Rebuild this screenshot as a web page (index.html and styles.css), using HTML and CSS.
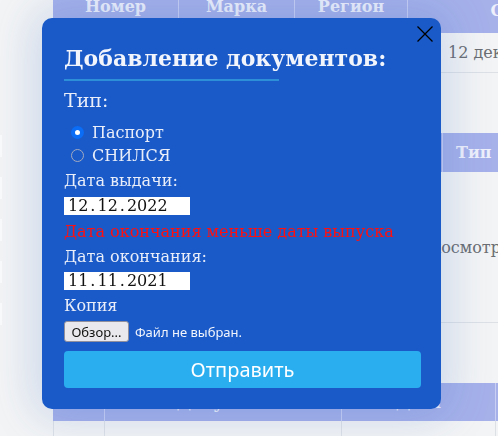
FILE: index.html
```html
<!DOCTYPE html>
<html lang="ru">
<head>
<meta charset="utf-8">
<title>Добавление документов</title>
<link rel="stylesheet" href="styles.css">
</head>
<body>
<div class="page">
  <aside class="side">
    <span class="side-item"></span>
    <span class="side-item"></span>
    <span class="side-item"></span>
    <span class="side-item"></span>
    <span class="side-item"></span>
  </aside>
  <main class="main">
    <div class="table t1">
      <div class="thead">
        <div class="th">Номер</div>
        <div class="th">Марка</div>
        <div class="th">Регион</div>
        <div class="th th-last">Срок</div>
      </div>
      <div class="trow">
        <div class="td"></div>
        <div class="td"></div>
        <div class="td"></div>
        <div class="td">12 декабря</div>
      </div>
    </div>

    <div class="table t2">
      <div class="thead">
        <div class="th">Номер</div>
        <div class="th">Тип</div>
      </div>
      <div class="trow tall">
        <div class="td"></div>
        <div class="td">Техосмотр</div>
      </div>
      <div class="trow empty"></div>
    </div>

    <div class="table t3">
      <div class="thead">
        <div class="th"></div>
        <div class="th">Документ</div>
        <div class="th">Дата</div>
        <div class="th"></div>
      </div>
      <div class="trow">
        <div class="td"></div>
        <div class="td"></div>
        <div class="td"></div>
        <div class="td"></div>
      </div>
    </div>
  </main>
</div>

<div class="modal">
  <button class="close" aria-label="Закрыть">
    <svg width="16" height="16" viewBox="0 0 16 16"><path d="M0.5 0.5 L15.5 15.5 M15.5 0.5 L0.5 15.5" stroke="#000" stroke-width="1.3" fill="none"/></svg>
  </button>
  <h2 class="title">Добавление документов:</h2>
  <div class="rule"></div>
  <div class="label big">Тип:</div>
  <label class="radio-row first"><span class="radio checked"></span>Паспорт</label>
  <label class="radio-row"><span class="radio"></span>СНИЛСЯ</label>
  <div class="label">Дата выдачи:</div>
  <div class="date"><span>12</span><span>.</span><span>12</span><span>.</span><span>2022</span></div>
  <div class="error">Дата окончания меньше даты выпуска</div>
  <div class="label">Дата окончания:</div>
  <div class="date"><span>11</span><span>.</span><span>11</span><span>.</span><span>2021</span></div>
  <div class="label">Копия</div>
  <div class="file"><span class="file-btn">Обзор...</span><span class="file-name">Файл не выбран.</span></div>
  <button class="submit">Отправить</button>
</div>
</body>
</html>
```

FILE: styles.css
```css
* { box-sizing: border-box; }
html, body { margin: 0; padding: 0; }
body {
  background: #f3f4f5;
  font-family: "DejaVu Serif", serif;
  width: 498px;
  height: 436px;
  overflow: hidden;
}
.page { display: flex; }
.side {
  width: 53px;
  flex: none;
  display: flex;
  flex-direction: column;
  gap: 20px;
  padding-top: 135px;
}
.side-item { display: block; width: 2px; height: 22px; background: #fbfbfc; }
.main { flex: none; width: 600px; margin-top: -20px; }

.table { width: 566px; }
.thead {
  display: grid;
  background: #a6b1ea;
  color: #eef0fb;
  font-weight: bold;
  font-size: 16px;
}
.th {
  display: flex;
  align-items: center;
  justify-content: center;
  border-left: 1px solid #c9cff3;
}
.th:first-child { border-left: none; }
.trow { display: grid; border-bottom: 1px solid #dde1e6; }
.td {
  display: flex;
  align-items: center;
  color: #6b6e72;
  font-size: 16px;
  white-space: nowrap;
  overflow: hidden;
}

.t1 .thead, .t1 .trow { grid-template-columns: 125px 116px 113px 1fr; }
.t1 .thead { height: 53px; }
.t1 .th-last { align-items: flex-end; padding-bottom: 13px; }
.t1 .trow { height: 40px; }
.t1 .td:last-child { padding-left: 41px; }

.t2 { margin-top: 60px; }
.t2 .thead, .t2 .trow { grid-template-columns: 389px 1fr; }
.t2 .thead { height: 39px; }
.t2 .th:last-child { justify-content: flex-start; padding-left: 13px; }
.t2 .trow.tall { height: 151px; }
.t2 .td:last-child { justify-content: flex-start; }
.t2 .trow.tall .td:last-child { margin-left: -30px; }
.t2 .trow.empty { height: 60px; border-bottom: none; }

.t3 .thead, .t3 .trow { grid-template-columns: 51px 237px 154px 1fr; }
.t3 .thead { height: 38px; }
.t3 .trow { height: 40px; border-bottom: none; }
.t3 .td { border-left: 1px solid #dde1e6; }

/* modal */
.modal {
  position: fixed;
  left: 42px;
  top: 18px;
  width: 399px;
  height: 391px;
  padding: 28px 20px 20px 22px;
  background: #1a5ac8;
  border-radius: 10px;
  box-shadow: 0 0 45px 8px rgba(40, 100, 195, 0.2);
  color: #e9eef9;
  font-family: "DejaVu Serif", serif;
  font-size: 16px;
  display: flex;
  flex-direction: column;
  align-items: flex-start;
}
.close {
  position: absolute;
  right: 8px;
  top: 8px;
  width: 16px;
  height: 16px;
  padding: 0;
  border: none;
  background: none;
  display: flex;
}
.title {
  margin: 0;
  font-size: 22px;
  line-height: 24px;
  font-weight: bold;
  color: #f2f5fc;
}
.rule {
  width: 215px;
  height: 2px;
  margin-top: 9px;
  background: #2d8fd8;
}
.label { line-height: 22px; }
.label.big { font-size: 19px; margin-top: 8px; }
.radio-row {
  display: flex;
  align-items: center;
  gap: 8px;
  padding-left: 7px;
  line-height: 23px;
}
.radio-row.first { margin-top: 10px; }
.radio {
  width: 13px;
  height: 13px;
  border-radius: 50%;
  border: 1px solid #a3aac0;
  background: #1a5ac8;
}
.radio.checked {
  border: 4px solid #0b6cf5;
  background: #fff;
}
.radio-row + .label { margin-top: 3px; }
.date {
  margin-top: 5px;
  width: 126px;
  height: 18px;
  background: #fff;
  color: #111;
  display: flex;
  align-items: center;
  gap: 2px;
  padding-left: 4px;
  font-size: 16px;
  line-height: 18px;
}
.error {
  margin-top: 6px;
  color: #ff1010;
  line-height: 22px;
}
.error + .label { margin-top: 3px; }
.label + .date { margin-top: 5px; }
.error + .label + .date { margin-top: 4px; }
.date + .label { margin-top: 5px; }
.file {
  margin-top: 4px;
  display: flex;
  align-items: center;
  gap: 6px;
  font-family: "Noto Sans", sans-serif;
  font-size: 13px;
}
.file-btn {
  height: 21px;
  width: 65px;
  display: flex;
  align-items: center;
  justify-content: center;
  background: #e9e9ed;
  border: 1px solid #8f8f9d;
  border-radius: 3px;
  color: #111;
}
.file-name { color: #f2f5fc; }
.submit {
  margin-top: 9px;
  width: 100%;
  height: 37px;
  border: none;
  border-radius: 4px;
  background: #2aaef0;
  color: #fff;
  font-family: "Noto Sans", sans-serif;
  font-size: 20px;
  padding: 0;
}
```
